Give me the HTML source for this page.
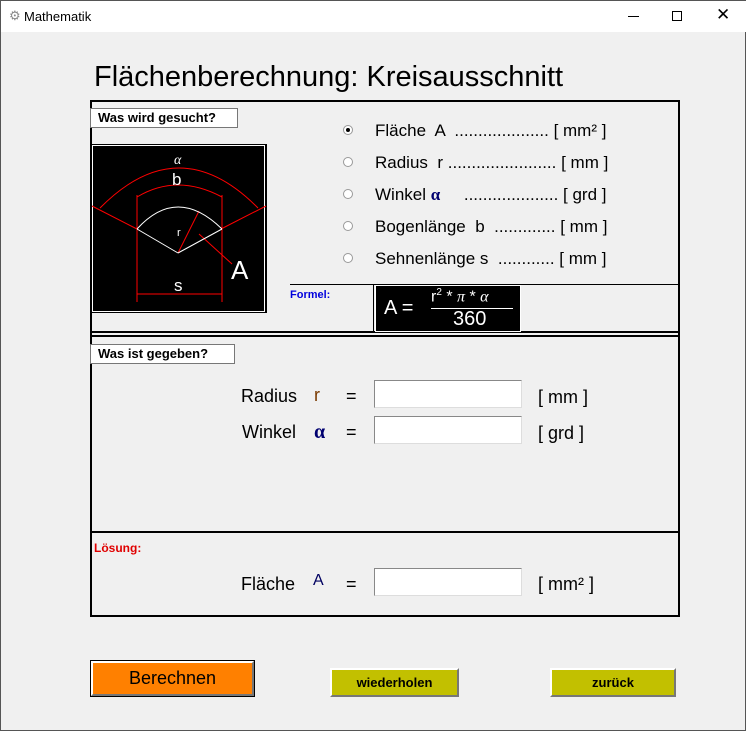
<!DOCTYPE html>
<html><head><meta charset="utf-8"><style>
*{margin:0;padding:0;box-sizing:border-box}
body{width:746px;height:731px;background:#f0f0f0;font-family:"Liberation Sans",sans-serif;position:relative;overflow:hidden;border:1px solid #555}
.a{position:absolute}
.t{white-space:nowrap;color:#000}
.lab{position:absolute;background:#fff;border:1px solid #777;font-weight:bold;font-size:13px;padding-left:7px;line-height:18px}
.hl{position:absolute;height:2px;background:#000}
.inp{position:absolute;background:#fff;border:1px solid #888;border-right-color:#ddd;border-bottom-color:#ddd;width:148px;height:28px}
.rb{position:absolute;width:10px;height:10px;border-radius:50%;border:1px solid #999;background:#fff}
.opt{position:absolute;font-size:17px;white-space:nowrap}
.btn{position:absolute;border:2px solid;border-color:#fff #777 #777 #fff;background:#c2c000;font-weight:bold;font-size:13px;text-align:center}
</style></head><body>
<div class="a" style="left:0;top:0;width:746px;height:31px;background:#fff"></div>
<div class="a t" style="left:8px;top:7px;font-size:13px;color:#888">⚙</div>
<div class="a t" style="left:23px;top:8px;font-size:13px">Mathematik</div>
<div class="a" style="left:627px;top:15px;width:11px;height:1px;background:#000"></div>
<div class="a" style="left:671px;top:10px;width:10px;height:10px;border:1px solid #000"></div>
<div class="a t" style="left:715px;top:4px;font-size:17px;font-weight:300">✕</div>

<div class="a t" style="left:93px;top:60px;font-size:29px">Flächenberechnung: Kreisausschnitt</div>

<div class="a" style="left:89px;top:99px;width:590px;height:517px;border:2px solid #000"></div>
<div class="hl" style="left:289px;top:283px;width:390px;height:1px"></div>
<div class="hl" style="left:89px;top:330px;width:590px"></div>
<div class="hl" style="left:89px;top:334px;width:590px"></div>
<div class="hl" style="left:89px;top:530px;width:590px"></div>
<div class="a" style="left:372px;top:283px;width:1px;height:48px;background:#000"></div>

<div class="lab" style="left:89px;top:107px;width:148px;height:20px">Was wird gesucht?</div>
<div class="lab" style="left:89px;top:343px;width:145px;height:20px">Was ist gegeben?</div>

<svg class="a" style="left:90px;top:143px" width="176" height="169" viewBox="0 0 176 169">
<rect x="0" y="0" width="176" height="169" fill="#000"/>
<rect x="1.5" y="1.5" width="172" height="166" fill="none" stroke="#fff"/>
<g stroke="red" fill="none" stroke-width="1">
<line x1="1" y1="62" x2="46" y2="85"/><line x1="175" y1="62" x2="130" y2="85"/>
<path d="M9 64 Q88 -16 167 64"/>
<path d="M46 53 Q86 29 131 53"/>
<line x1="46" y1="51" x2="46" y2="158"/><line x1="131" y1="51" x2="131" y2="158"/>
<line x1="46" y1="150" x2="131" y2="150"/>
<line x1="87" y1="109" x2="108" y2="67"/>
<line x1="108" y1="90" x2="141" y2="120"/>
</g>
<g stroke="#fff" fill="none"><path d="M46 85 Q86 41 131 85"/><line x1="46" y1="85" x2="87" y2="109"/><line x1="131" y1="85" x2="87" y2="109"/></g>
<text x="83" y="20" fill="#fff" font-size="14" font-style="italic" font-family="Liberation Serif">α</text>
<text x="81" y="41" fill="#fff" font-size="17">b</text>
<text x="83" y="147" fill="#fff" font-size="17">s</text>
<text x="140" y="135" fill="#fff" font-size="26">A</text>
<text x="86" y="92" fill="#fff" font-size="11">r</text>
</svg>

<div class="rb" style="left:342px;top:124px"><div class="a" style="left:2px;top:2px;width:4px;height:4px;border-radius:50%;background:#000"></div></div>
<div class="rb" style="left:342px;top:156px"></div>
<div class="rb" style="left:342px;top:188px"></div>
<div class="rb" style="left:342px;top:220px"></div>
<div class="rb" style="left:342px;top:252px"></div>
<div class="opt" style="left:374px;top:120px">Fläche&nbsp; A &nbsp;.................... [ mm² ]</div>
<div class="opt" style="left:374px;top:152px">Radius&nbsp; r ....................... [ mm ]</div>
<div class="opt" style="left:374px;top:184px">Winkel <b style="color:#000070;font-family:'Liberation Serif'">α</b> &nbsp;&nbsp;&nbsp;&nbsp;.................... [ grd ]</div>
<div class="opt" style="left:374px;top:216px">Bogenlänge&nbsp; b &nbsp;............. [ mm ]</div>
<div class="opt" style="left:374px;top:248px">Sehnenlänge s &nbsp;............ [ mm ]</div>

<div class="a t" style="left:289px;top:288px;font-size:11px;font-weight:bold;color:#0000dd">Formel:</div>
<div class="a" style="left:374px;top:284px;width:146px;height:47px;background:#000;border:1px solid #fff"></div>
<div class="a t" style="left:383px;top:296px;font-size:20px;color:#fff">A =</div>
<div class="a t" style="left:430px;top:286px;font-size:16px;color:#fff">r<sup style="font-size:10px">2</sup> * <i style="font-family:'Liberation Serif'">π</i> * <i style="font-family:'Liberation Serif'">α</i></div>
<div class="a" style="left:430px;top:307px;width:82px;height:1px;background:#fff"></div>
<div class="a t" style="left:452px;top:307px;font-size:20px;color:#fff">360</div>

<div class="a t" style="left:240px;top:385px;font-size:18px">Radius</div>
<div class="a t" style="left:313px;top:384px;font-size:18px;color:#7a3a00">r</div>
<div class="a t" style="left:345px;top:385px;font-size:18px">=</div>
<div class="inp" style="left:373px;top:379px"></div>
<div class="a t" style="left:537px;top:386px;font-size:18px">[ mm ]</div>
<div class="a t" style="left:241px;top:421px;font-size:18px">Winkel</div>
<div class="a t" style="left:313px;top:420px;font-size:20px;color:#000070;font-weight:bold;font-family:'Liberation Serif'">α</div>
<div class="a t" style="left:345px;top:421px;font-size:18px">=</div>
<div class="inp" style="left:373px;top:415px"></div>
<div class="a t" style="left:537px;top:422px;font-size:18px">[ grd ]</div>

<div class="a t" style="left:93px;top:540px;font-size:12px;font-weight:bold;color:#e00000">Lösung:</div>
<div class="a t" style="left:240px;top:573px;font-size:18px">Fläche</div>
<div class="a t" style="left:312px;top:571px;font-size:16px;color:#000060">A</div>
<div class="a t" style="left:345px;top:573px;font-size:18px">=</div>
<div class="inp" style="left:373px;top:567px"></div>
<div class="a t" style="left:537px;top:573px;font-size:18px">[ mm² ]</div>

<div class="a" style="left:89px;top:659px;width:165px;height:37px;border:1px solid #000"></div>
<div class="btn" style="left:90px;top:660px;width:163px;height:35px;background:#ff8000;font-weight:normal;font-size:18px;line-height:31px">Berechnen</div>
<div class="btn" style="left:329px;top:667px;width:129px;height:29px;line-height:25px">wiederholen</div>
<div class="btn" style="left:549px;top:667px;width:126px;height:29px;line-height:25px">zurück</div>
</body></html>
